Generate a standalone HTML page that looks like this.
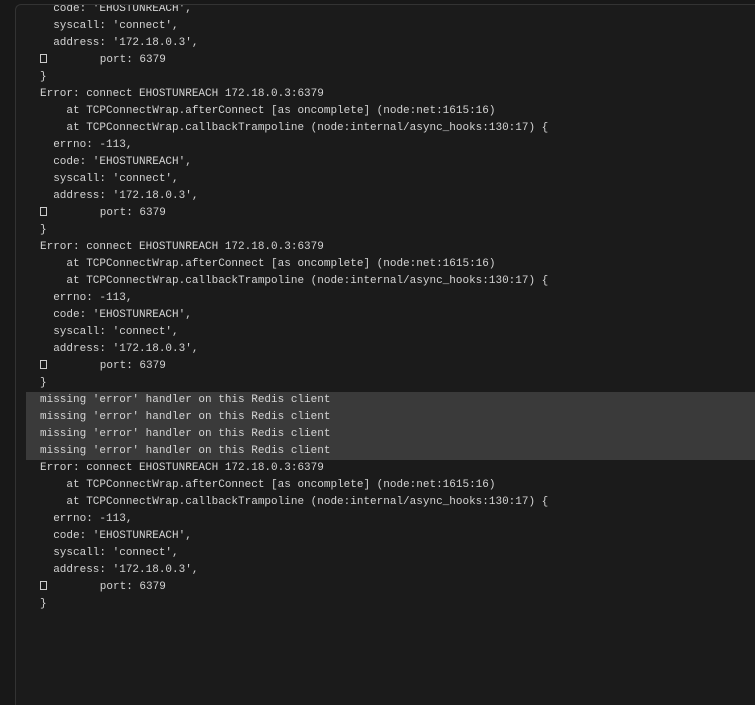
<!DOCTYPE html>
<html><head><meta charset="utf-8"><style>
html,body{margin:0;padding:0;width:755px;height:669px;background:#181818;overflow:hidden}
.panel{position:absolute;left:15px;top:4px;width:760px;height:700px;background:#1b1b1b;border-left:1px solid #333;border-top:1px solid #333;border-top-left-radius:6px;overflow:hidden}
.c{position:absolute;left:0;top:-4px;width:100%}
.l{height:17px;line-height:17px;font-family:"Liberation Mono",monospace;font-size:11px;color:#d4d4d4;white-space:pre;padding-left:24px}
.h{background:#3a3a3a;margin-left:10px;padding-left:14px}
.g{display:inline-block;width:7px;height:9px;border:1px solid #ccc;box-sizing:border-box;vertical-align:-1px;margin-right:0px}
</style></head><body>
<div class="panel"><div class="c">
<div class="l">  code: 'EHOSTUNREACH',</div>
<div class="l">  syscall: 'connect',</div>
<div class="l">  address: '172.18.0.3',</div>
<div class="l"><span class="g"></span>        port: 6379</div>
<div class="l">}</div>
<div class="l">Error: connect EHOSTUNREACH 172.18.0.3:6379</div>
<div class="l">    at TCPConnectWrap.afterConnect [as oncomplete] (node:net:1615:16)</div>
<div class="l">    at TCPConnectWrap.callbackTrampoline (node:internal/async_hooks:130:17) {</div>
<div class="l">  errno: -113,</div>
<div class="l">  code: 'EHOSTUNREACH',</div>
<div class="l">  syscall: 'connect',</div>
<div class="l">  address: '172.18.0.3',</div>
<div class="l"><span class="g"></span>        port: 6379</div>
<div class="l">}</div>
<div class="l">Error: connect EHOSTUNREACH 172.18.0.3:6379</div>
<div class="l">    at TCPConnectWrap.afterConnect [as oncomplete] (node:net:1615:16)</div>
<div class="l">    at TCPConnectWrap.callbackTrampoline (node:internal/async_hooks:130:17) {</div>
<div class="l">  errno: -113,</div>
<div class="l">  code: 'EHOSTUNREACH',</div>
<div class="l">  syscall: 'connect',</div>
<div class="l">  address: '172.18.0.3',</div>
<div class="l"><span class="g"></span>        port: 6379</div>
<div class="l">}</div>
<div class="l h">missing 'error' handler on this Redis client</div>
<div class="l h">missing 'error' handler on this Redis client</div>
<div class="l h">missing 'error' handler on this Redis client</div>
<div class="l h">missing 'error' handler on this Redis client</div>
<div class="l">Error: connect EHOSTUNREACH 172.18.0.3:6379</div>
<div class="l">    at TCPConnectWrap.afterConnect [as oncomplete] (node:net:1615:16)</div>
<div class="l">    at TCPConnectWrap.callbackTrampoline (node:internal/async_hooks:130:17) {</div>
<div class="l">  errno: -113,</div>
<div class="l">  code: 'EHOSTUNREACH',</div>
<div class="l">  syscall: 'connect',</div>
<div class="l">  address: '172.18.0.3',</div>
<div class="l"><span class="g"></span>        port: 6379</div>
<div class="l">}</div>
</div></div>
</body></html>
